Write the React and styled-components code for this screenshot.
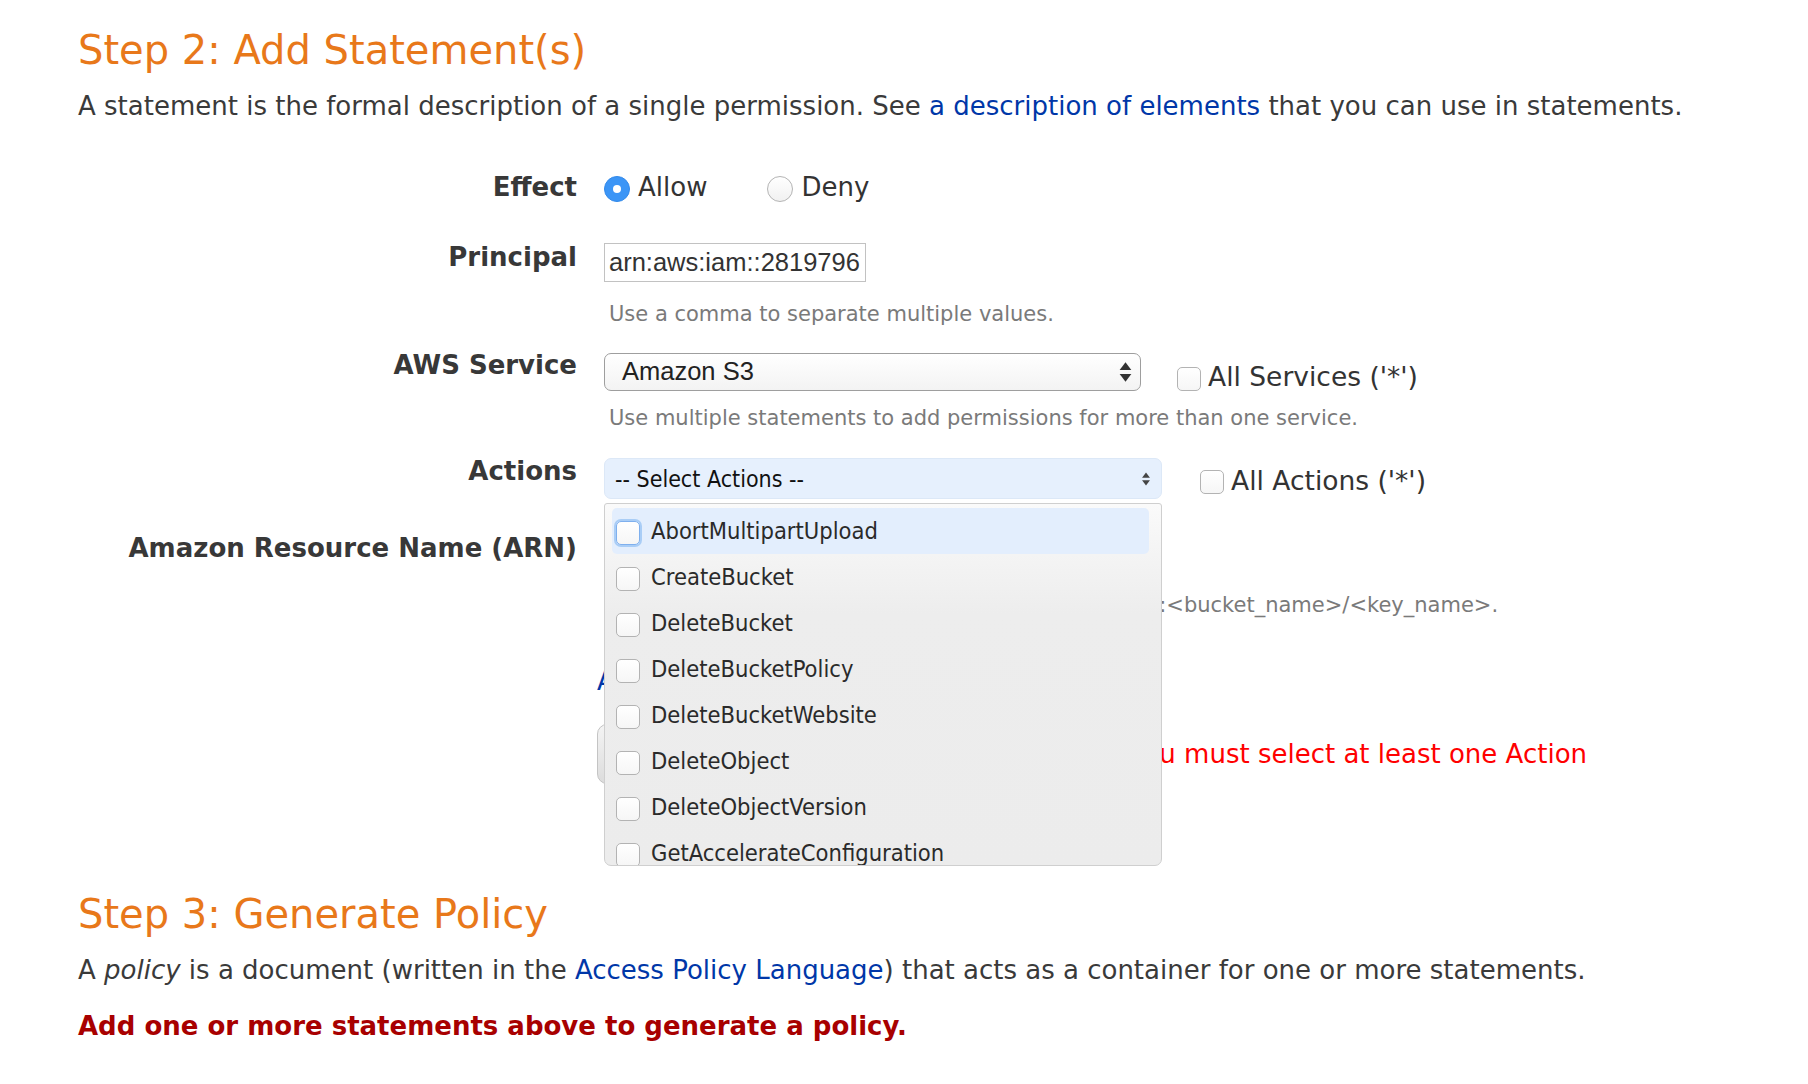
import React from "react";
import styled, { createGlobalStyle } from "styled-components";

const GlobalStyle = createGlobalStyle`
  html, body {
    margin: 0;
    padding: 0;
    background: #fff;
  }
  body {
    font-family: "DejaVu Sans", Verdana, sans-serif;
    color: #333;
  }
`;

const condensed = `"DejaVu Sans Condensed", "DejaVu Sans", sans-serif`;

const Page = styled.div`
  padding: 26px 0 40px 78px;
  width: 1730px;
  box-sizing: border-box;
`;

const Heading = styled.h2`
  margin: ${(p) => p.$top || 0}px 0 0;
  font-size: 40px;
  line-height: 48px;
  font-weight: normal;
  color: #e8781a;
`;

const Intro = styled.p`
  margin: ${(p) => p.$top || 16}px 0 0;
  font-size: 26px;
  line-height: 32px;
  color: #3a3a3a;
  white-space: nowrap;
  em {
    font-style: oblique;
  }
`;

const Link = styled.a`
  color: #0037a8;
  text-decoration: none;
`;

const Warning = styled.p`
  margin: 24px 0 0;
  font-size: 26px;
  line-height: 32px;
  font-weight: bold;
  color: #a80000;
`;

const Form = styled.div`
  display: flex;
  flex-direction: column;
`;

const Row = styled.div`
  display: grid;
  grid-template-columns: 499px 1fr;
  column-gap: 27px;
  align-items: start;
  margin-top: ${(p) => p.$top}px;
`;

const Label = styled.div`
  text-align: right;
  font-size: 26px;
  line-height: 32px;
  font-weight: bold;
  color: #383838;
  white-space: nowrap;
`;

const Field = styled.div`
  display: flex;
  flex-direction: column;
  align-items: flex-start;
`;

const Inline = styled.div`
  display: flex;
  align-items: center;
  gap: ${(p) => p.$gap || 36}px;
`;

const RadioGroup = styled.div`
  display: flex;
  align-items: center;
  height: 32px;
  gap: 60px;
`;

const RadioOption = styled.label`
  display: flex;
  align-items: center;
  gap: 8px;
  font-size: 26px;
  color: #333;
`;

const Radio = styled.span`
  width: 26px;
  height: 26px;
  border-radius: 50%;
  box-sizing: border-box;
  display: flex;
  align-items: center;
  justify-content: center;
  margin-top: 3px;
  background: ${(p) =>
    p.$checked ? "#3b95f6" : "linear-gradient(#ffffff, #f1f1f1)"};
  border: 1px solid ${(p) => (p.$checked ? "#3189ea" : "#b4b4b4")};
  &::after {
    content: "";
    display: ${(p) => (p.$checked ? "block" : "none")};
    width: 8px;
    height: 8px;
    border-radius: 50%;
    background: #fff;
  }
`;

const TextInput = styled.input`
  margin-top: 2px;
  width: ${(p) => p.$width || 262}px;
  height: 39px;
  box-sizing: border-box;
  border: 1px solid #c2c2c2;
  padding: 0 0 0 4px;
  font-family: "Liberation Sans", Arial, sans-serif;
  font-size: 25.5px;
  color: #333;
  background: #fff;
  outline: none;
`;

const Hint = styled.div`
  margin-top: ${(p) => p.$top || 19}px;
  padding-left: 5px;
  font-size: 21px;
  line-height: 26px;
  color: #7a7a7a;
  white-space: nowrap;
`;

const ServiceSelect = styled.div`
  margin-top: 2px;
  width: 537px;
  height: 38px;
  box-sizing: border-box;
  border: 1px solid #9e9e9e;
  border-radius: 7px;
  background: linear-gradient(#ffffff, #f3f3f3);
  display: flex;
  align-items: center;
  justify-content: space-between;
  padding: 0 8px 0 17px;
  font-family: "Liberation Sans", Arial, sans-serif;
  font-size: 25.5px;
  color: #222;
`;

const ActionWrap = styled.div`
  position: relative;
  margin-top: 3px;
`;

const ActionSelect = styled.div`
  width: 558px;
  height: 41px;
  box-sizing: border-box;
  border: 1px solid #dce8f7;
  border-radius: 7px;
  background: #e6f0fd;
  display: flex;
  align-items: center;
  justify-content: space-between;
  padding: 0 10px 0 10px;
  font-family: ${condensed};
  font-size: 23px;
  color: #111;
`;

const Dropdown = styled.div`
  position: absolute;
  top: 45px;
  left: 0;
  z-index: 5;
  width: 558px;
  height: 363px;
  box-sizing: border-box;
  border: 1px solid #cfcfcf;
  border-radius: 3px 3px 7px 7px;
  background: linear-gradient(#fafafa 0px, #ededed 110px, #ececec);
  overflow: hidden;
  padding: 4px 12px 0 7px;
`;

const Option = styled.div`
  display: flex;
  align-items: center;
  gap: 11px;
  height: 46px;
  padding-left: 4px;
  border-radius: 5px;
  background: ${(p) => (p.$active ? "#e3eefd" : "transparent")};
  font-family: ${condensed};
  font-size: 23.5px;
  color: #2a2a2a;
  white-space: nowrap;
`;

const Check = styled.span`
  flex: none;
  width: 24px;
  height: 24px;
  box-sizing: border-box;
  border-radius: 5px;
  border: 1px solid ${(p) => (p.$focus ? "#7fb0ee" : "#b3b3b3")};
  box-shadow: ${(p) => (p.$focus ? "0 0 0 2px #a9cdf6" : "none")};
  background: linear-gradient(#ffffff, #f6f6f6);
  margin-top: ${(p) => p.$offset || 4}px;
`;

const CheckLabel = styled.label`
  display: flex;
  align-items: center;
  gap: 7px;
  font-size: 26.5px;
  color: #333;
  white-space: nowrap;
  margin-top: ${(p) => p.$top || 0}px;
`;

const BlueLink = styled.a`
  font-size: 26px;
  line-height: 32px;
  color: #0037a8;
  margin-left: -7px;
  text-decoration: none;
`;

const ButtonRow = styled.div`
  display: flex;
  align-items: center;
  margin-left: -7px;
`;

const Button = styled.button`
  width: 480px;
  height: 60px;
  border-radius: 10px;
  border: 1px solid #c4c4c4;
  background: linear-gradient(#f4f4f4, #dcdcdc);
  font-family: inherit;
  font-size: 24px;
  color: #333;
`;

const ErrorText = styled.span`
  margin-left: 54px;
  font-size: 26px;
  color: #ff0000;
  white-space: nowrap;
`;

function UpDown({ small }) {
  const w = small ? 10 : 13;
  const h = small ? 14 : 22;
  return (
    <svg width={w} height={h} viewBox="0 0 10 16">
      <path d="M5 0.5 L9.5 6.5 H0.5 Z" fill={small ? "#444" : "#333"} />
      <path d="M5 15.5 L9.5 9.5 H0.5 Z" fill={small ? "#444" : "#333"} />
    </svg>
  );
}

const actions = [
  "AbortMultipartUpload",
  "CreateBucket",
  "DeleteBucket",
  "DeleteBucketPolicy",
  "DeleteBucketWebsite",
  "DeleteObject",
  "DeleteObjectVersion",
  "GetAccelerateConfiguration",
];

export default function App() {
  return (
    <Page>
      <GlobalStyle />
      <Heading>Step 2: Add Statement(s)</Heading>
      <Intro>
        A statement is the formal description of a single permission. See{" "}
        <Link href="#">a description of elements</Link> that you can use in
        statements.
      </Intro>

      <Form>
        <Row $top={49}>
          <Label>Effect</Label>
          <Field>
            <RadioGroup>
              <RadioOption>
                <Radio $checked />
                Allow
              </RadioOption>
              <RadioOption>
                <Radio />
                Deny
              </RadioOption>
            </RadioGroup>
          </Field>
        </Row>

        <Row $top={38}>
          <Label>Principal</Label>
          <Field>
            <TextInput value="arn:aws:iam::2819796" readOnly />
            <Hint>Use a comma to separate multiple values.</Hint>
          </Field>
        </Row>

        <Row $top={22}>
          <Label>AWS Service</Label>
          <Field>
            <Inline $gap={36}>
              <ServiceSelect>
                Amazon S3
                <UpDown />
              </ServiceSelect>
              <CheckLabel $top={12}>
                <Check $offset={4} />
                All Services ('*')
              </CheckLabel>
            </Inline>
            <Hint $top={13}>
              Use multiple statements to add permissions for more than one
              service.
            </Hint>
          </Field>
        </Row>

        <Row $top={24}>
          <Label>Actions</Label>
          <Field>
            <Inline $gap={38}>
              <ActionWrap>
                <ActionSelect>
                  -- Select Actions --
                  <UpDown small />
                </ActionSelect>
                <Dropdown>
                  {actions.map((a, i) => (
                    <Option key={a} $active={i === 0}>
                      <Check $focus={i === 0} />
                      {a}
                    </Option>
                  ))}
                </Dropdown>
              </ActionWrap>
              <CheckLabel $top={6}>
                <Check $offset={4} />
                All Actions ('*')
              </CheckLabel>
            </Inline>
          </Field>
        </Row>

        <Row $top={33}>
          <Label>Amazon Resource Name (ARN)</Label>
          <Field>
            <TextInput $width={520} value="" readOnly />
            <Hint>
              ARN should follow the following format:
              arn:aws:s3:::&lt;bucket_name&gt;/&lt;key_name&gt;.
            </Hint>
          </Field>
        </Row>

        <Row $top={47}>
          <Label />
          <Field>
            <BlueLink href="#">Add Conditions (Optional)</BlueLink>
          </Field>
        </Row>

        <Row $top={27}>
          <Label />
          <Field>
            <ButtonRow>
              <Button>Add Statement</Button>
              <ErrorText>You must select at least one Action</ErrorText>
            </ButtonRow>
          </Field>
        </Row>
      </Form>

      <Heading $top={106}>Step 3: Generate Policy</Heading>
      <Intro>
        A <em>policy</em> is a document (written in the{" "}
        <Link href="#">Access Policy Language</Link>) that acts as a container
        for one or more statements.
      </Intro>
      <Warning>Add one or more statements above to generate a policy.</Warning>
    </Page>
  );
}
